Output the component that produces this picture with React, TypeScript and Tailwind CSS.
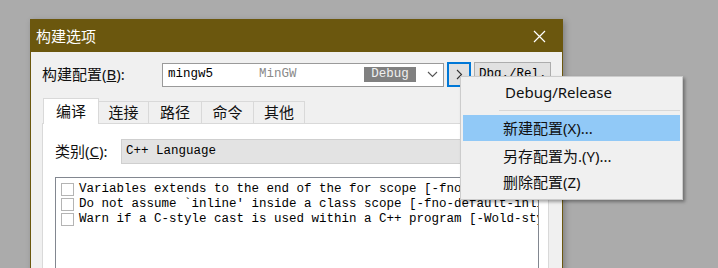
export default function App() {
  const ui = "font-['Noto_Sans','Noto_Sans_CJK_SC',sans-serif]";
  const mono = "font-['Liberation_Mono','Noto_Sans_CJK_SC',monospace]";
  return (
    <div className={`relative w-[718px] h-[268px] overflow-hidden bg-[#ababab] ${ui}`}>
      <div className="ml-[30px] mt-[19px] w-[533px] h-[300px] border border-[#6b570e] bg-[#f0f0f0] shadow-[2px_2px_6px_rgba(0,0,0,0.25)] flex flex-col">
        {/* Title bar */}
        <div className="h-[32px] bg-[#6b570e] flex items-center justify-between pl-[5px] pr-[16px]">
          <span className="text-[15px] text-white leading-none">构建选项</span>
          <svg width="13" height="13" viewBox="0 0 13 13">
            <path d="M1 1L12 12M12 1L1 12" stroke="white" strokeWidth="1.2" />
          </svg>
        </div>
        {/* Body */}
        <div className="pl-[11px] pt-[10px] flex flex-col">
          {/* Row 1 */}
          <div className="flex items-center h-[25px]">
            <span className="w-[120px] text-[15px] text-[#111] leading-none">
              构建配置(<span className="underline">B</span>):
            </span>
            <div className={`w-[282px] h-[24px] border border-[#9a9a9a] bg-white flex items-center pl-[5px] ${mono} text-[12.5px]`}>
              <span className="w-[91px] text-black">mingw5</span>
              <span className="w-[105px] text-[#8a8a8a]">MinGW</span>
              <span className="w-[52px] h-[15px] bg-[#808080] text-[#f0f0f0] flex items-center justify-center leading-none">Debug</span>
              <span className="flex-1 flex justify-center pl-[6px]">
                <svg width="11" height="7" viewBox="0 0 11 7">
                  <path d="M1 1L5.5 5.5L10 1" stroke="#555" strokeWidth="1.1" fill="none" />
                </svg>
              </span>
            </div>
            <div className="ml-[3px] w-[24px] h-[25px] border-2 border-[#0078d7] bg-[#e1e1e1] flex items-center justify-center">
              <svg width="7" height="11" viewBox="0 0 7 11">
                <path d="M1 1L5.5 5.5L1 10" stroke="#333" strokeWidth="1.1" fill="none" />
              </svg>
            </div>
            <div className={`ml-[3px] w-[77px] h-[25px] border border-[#adadad] bg-[#e1e1e1] flex items-center pl-[4px] ${mono} text-[12.5px] text-black overflow-hidden whitespace-nowrap`}>
              Dbg./Rel.
            </div>
          </div>
          {/* Tabs */}
          <div className="mt-[11px] ml-[1px] flex items-start text-[15px] leading-none text-[#111] relative z-10">
            <div className="w-[56px] h-[26px] bg-white border border-[#d9d9d9] border-b-0 flex items-center justify-center">编译</div>
            <div className="mt-[3px] w-[50px] h-[22px] bg-[#f0f0f0] border-t border-r border-[#d9d9d9] flex items-center justify-center">连接</div>
            <div className="mt-[3px] w-[53px] h-[22px] bg-[#f0f0f0] border-t border-r border-[#d9d9d9] flex items-center justify-center">路径</div>
            <div className="mt-[3px] w-[52px] h-[22px] bg-[#f0f0f0] border-t border-r border-[#d9d9d9] flex items-center justify-center">命令</div>
            <div className="mt-[3px] w-[51px] h-[22px] bg-[#f0f0f0] border-t border-r border-[#d9d9d9] flex items-center justify-center">其他</div>
          </div>
          {/* Panel */}
          <div className="-mt-[1px] w-[507px] h-[160px] bg-white border border-[#d9d9d9] pt-[15px] pl-[12px] pr-[9px] flex flex-col">
            <div className="flex items-center h-[25px]">
              <span className="w-[66px] text-[15px] leading-none text-[#111]">
                类别(<span className="underline">C</span>):
              </span>
              <div className={`flex-1 h-[25px] bg-[#e3e3e3] border border-[#cfcfcf] flex items-center pl-[4px] ${mono} text-[12.5px] text-black`}>
                C++ Language
              </div>
            </div>
            <div className={`mt-[13px] w-[484px] h-[100px] border border-[#828790] pt-[4px] pl-[5px] flex flex-col overflow-hidden ${mono} text-[12.5px] text-black`}>
              {[
                "Variables extends to the end of the for scope [-fno-for-scope]",
                "Do not assume `inline' inside a class scope [-fno-default-inline]",
                "Warn if a C-style cast is used within a C++ program [-Wold-style-cast]",
              ].map((t) => (
                <div key={t} className="flex items-center h-[15px] whitespace-nowrap">
                  <span className="w-[13px] h-[13px] border border-[#b4b4b4] bg-white shrink-0" />
                  <span className="ml-[5px] leading-none">{t}</span>
                </div>
              ))}
            </div>
          </div>
        </div>
      </div>
      {/* Popup menu */}
      <div className="absolute left-[460px] top-[76px] w-[223px] h-[124px] bg-[#f0f0f0] border border-[#cccccc] shadow-[2px_2px_3px_rgba(0,0,0,0.35)] pt-[2px] px-[2px] flex flex-col text-[15px] text-[#111] leading-none">
        <div className="h-[26px] flex items-center pl-[42px]">Debug/Release</div>
        <div className="h-[10px] flex items-center pl-[36px]">
          <div className="h-[1px] w-full bg-[#d7d7d7]" />
        </div>
        <div className="h-[26px] flex items-center pl-[40px] bg-[#91c9f7]">新建配置(X)...</div>
        <div className="h-[30px] flex items-center pl-[40px]">另存配置为.(Y)...</div>
        <div className="h-[22px] flex items-center pl-[40px]">删除配置(Z)</div>
      </div>
    </div>
  );
}
